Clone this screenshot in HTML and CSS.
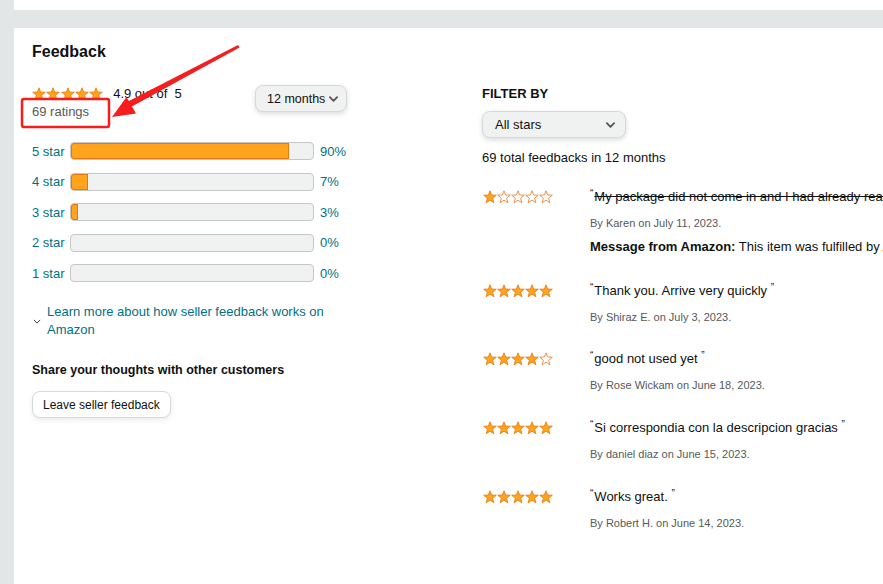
FILE: index.html
```html
<!DOCTYPE html>
<html lang="en">
<head>
    <meta charset="UTF-8">
    <title>Seller Feedback</title>
    <link rel="stylesheet" href="styles.css">
</head>

<body>
    <svg class="defs" aria-hidden="true">
        <symbol id="star-full" viewBox="0 0 14 14">
            <polygon points="7,0.8 8.65,5.03 13.3,5.2 9.66,8.17 10.9,12.8 7,10.2 3.1,12.8 4.34,8.17 0.7,5.2 5.35,5.03" fill="#ffa41c" stroke="#e47911" stroke-width="0.8" stroke-linejoin="round"/>
        </symbol>
        <symbol id="star-empty" viewBox="0 0 14 14">
            <polygon points="7,0.8 8.65,5.03 13.3,5.2 9.66,8.17 10.9,12.8 7,10.2 3.1,12.8 4.34,8.17 0.7,5.2 5.35,5.03" fill="#fff" stroke="#e8883a" stroke-width="0.9" stroke-linejoin="round"/>
        </symbol>
        <symbol id="chevron" viewBox="0 0 10 6">
            <polyline points="1,1 5,5 9,1" fill="none" stroke="#555" stroke-width="2" stroke-linecap="round" stroke-linejoin="round"/>
        </symbol>
    </svg>

    <div class="top-card"></div>

    <div class="feedback-card">
        <h1>Feedback</h1>

        <div class="columns">
            <div class="left-col">
                <div class="summary">
                    <div class="summary-text">
                        <div class="rating-line">
                            <span class="stars">
                                <svg class="star"><use href="#star-full"/></svg>
                                <svg class="star"><use href="#star-full"/></svg>
                                <svg class="star"><use href="#star-full"/></svg>
                                <svg class="star"><use href="#star-full"/></svg>
                                <svg class="star"><use href="#star-full"/></svg>
                            </span>
                            <span class="rating-value">4.9 out of&nbsp; 5</span>
                        </div>
                        <div class="rating-count">69 ratings</div>
                    </div>
                    <div class="dropdown period">
                        <span>12 months</span>
                        <svg class="chevron"><use href="#chevron"/></svg>
                    </div>
                </div>

                <div class="histogram">
                    <div class="bar-row">
                        <span class="bar-label">5 star</span>
                        <div class="bar"><div class="bar-fill" style="width: 90%"></div></div>
                        <span class="bar-pct">90%</span>
                    </div>
                    <div class="bar-row">
                        <span class="bar-label">4 star</span>
                        <div class="bar"><div class="bar-fill" style="width: 7%"></div></div>
                        <span class="bar-pct">7%</span>
                    </div>
                    <div class="bar-row">
                        <span class="bar-label">3 star</span>
                        <div class="bar"><div class="bar-fill" style="width: 3%"></div></div>
                        <span class="bar-pct">3%</span>
                    </div>
                    <div class="bar-row">
                        <span class="bar-label">2 star</span>
                        <div class="bar"></div>
                        <span class="bar-pct">0%</span>
                    </div>
                    <div class="bar-row">
                        <span class="bar-label">1 star</span>
                        <div class="bar"></div>
                        <span class="bar-pct">0%</span>
                    </div>
                </div>

                <div class="learn-more">
                    <svg class="expander" viewBox="0 0 10 6"><polyline points="1,1 5,5 9,1" fill="none" stroke="#333" stroke-width="1.2"/></svg>
                    <a href="#">Learn more about how seller feedback works on Amazon</a>
                </div>

                <h3>Share your thoughts with other customers</h3>
                <button type="button">Leave seller feedback</button>
            </div>

            <div class="right-col">
                <h4>FILTER BY</h4>
                <div class="dropdown star-filter">
                    <span>All stars</span>
                    <svg class="chevron"><use href="#chevron"/></svg>
                </div>
                <p class="total">69 total feedbacks in 12 months</p>

                <div class="review-list">
                    <div class="review">
                        <span class="stars">
                            <svg class="star"><use href="#star-full"/></svg>
                            <svg class="star"><use href="#star-empty"/></svg>
                            <svg class="star"><use href="#star-empty"/></svg>
                            <svg class="star"><use href="#star-empty"/></svg>
                            <svg class="star"><use href="#star-empty"/></svg>
                        </span>
                        <div class="review-body">
                            <p class="quote"><span class="qm">“</span><s>My package did not come in and I had already reached out to the seller</s></p>
                            <p class="byline">By Karen on July 11, 2023.</p>
                            <p class="message"><b>Message from Amazon:</b> This item was fulfilled by Amazon, and we take responsibility for this fulfillment experience.</p>
                        </div>
                    </div>

                    <div class="review">
                        <span class="stars">
                            <svg class="star"><use href="#star-full"/></svg>
                            <svg class="star"><use href="#star-full"/></svg>
                            <svg class="star"><use href="#star-full"/></svg>
                            <svg class="star"><use href="#star-full"/></svg>
                            <svg class="star"><use href="#star-full"/></svg>
                        </span>
                        <div class="review-body">
                            <p class="quote"><span class="qm">“</span>Thank you. Arrive very quickly <span class="qm">”</span></p>
                            <p class="byline">By Shiraz E. on July 3, 2023.</p>
                        </div>
                    </div>

                    <div class="review">
                        <span class="stars">
                            <svg class="star"><use href="#star-full"/></svg>
                            <svg class="star"><use href="#star-full"/></svg>
                            <svg class="star"><use href="#star-full"/></svg>
                            <svg class="star"><use href="#star-full"/></svg>
                            <svg class="star"><use href="#star-empty"/></svg>
                        </span>
                        <div class="review-body">
                            <p class="quote"><span class="qm">“</span>good not used yet <span class="qm">”</span></p>
                            <p class="byline">By Rose Wickam on June 18, 2023.</p>
                        </div>
                    </div>

                    <div class="review">
                        <span class="stars">
                            <svg class="star"><use href="#star-full"/></svg>
                            <svg class="star"><use href="#star-full"/></svg>
                            <svg class="star"><use href="#star-full"/></svg>
                            <svg class="star"><use href="#star-full"/></svg>
                            <svg class="star"><use href="#star-full"/></svg>
                        </span>
                        <div class="review-body">
                            <p class="quote"><span class="qm">“</span>Si correspondia con la descripcion gracias <span class="qm">”</span></p>
                            <p class="byline">By daniel diaz on June 15, 2023.</p>
                        </div>
                    </div>

                    <div class="review">
                        <span class="stars">
                            <svg class="star"><use href="#star-full"/></svg>
                            <svg class="star"><use href="#star-full"/></svg>
                            <svg class="star"><use href="#star-full"/></svg>
                            <svg class="star"><use href="#star-full"/></svg>
                            <svg class="star"><use href="#star-full"/></svg>
                        </span>
                        <div class="review-body">
                            <p class="quote"><span class="qm">“</span>Works great. <span class="qm">”</span></p>
                            <p class="byline">By Robert H. on June 14, 2023.</p>
                        </div>
                    </div>
                </div>
            </div>
        </div>
    </div>

    <!-- screenshot annotation drawn on top of the page -->
    <svg class="annotation" width="883" height="584" viewBox="0 0 883 584">
        <rect x="22" y="99" width="87" height="28" rx="2" fill="none" stroke="#f51d1d" stroke-width="2.5"/>
        <polygon points="238,45 239.5,47.5 130,107.5 127,102" fill="#f51d1d"/>
        <polygon points="112,117 126.5,97 136,113.5" fill="#f51d1d"/>
    </svg>
</body>
</html>
```

FILE: styles.css
```css
* {
    box-sizing: border-box;
    margin: 0;
    padding: 0;
}

body {
    background-color: #e3e6e6;
    font-family: 'Liberation Sans', Arial, sans-serif;
    font-size: 13px;
    color: #0f1111;
    padding-left: 14px;
    height: 584px;
    overflow: hidden;
    position: relative;
}

.defs {
    display: none;
}

.top-card {
    height: 10px;
    background-color: white;
}

.feedback-card {
    margin-top: 18px;
    background-color: white;
    padding: 14px 0 40px 18px;
    height: 556px;
    overflow: hidden;
}

h1 {
    font-size: 16px;
    line-height: 20px;
    font-weight: 700;
}

.columns {
    display: grid;
    grid-template-columns: 450px 1fr;
    margin-top: 24px;
}

/* left column */

.summary {
    display: flex;
    justify-content: space-between;
    align-items: flex-start;
    width: 315px;
}

.rating-line {
    display: flex;
    align-items: center;
    height: 16px;
    line-height: 16px;
}

.stars {
    display: flex;
}

.star {
    width: 14px;
    height: 14px;
}

.summary .stars {
    gap: 0.3px;
    margin-right: 10px;
}

.rating-count {
    margin-top: 2px;
    line-height: 16px;
    color: #565959;
}

.dropdown {
    display: flex;
    align-items: center;
    justify-content: space-between;
    height: 27px;
    padding: 0 10px 0 12px;
    white-space: nowrap;
    background-color: #f0f2f2;
    border: 1px solid #d5d9d9;
    border-radius: 8px;
    box-shadow: 0 2px 5px rgba(15, 17, 17, 0.15);
}

.chevron {
    width: 9px;
    height: 6px;
    flex-shrink: 0;
}

.period {
    width: 92px;
    margin-top: -1px;
    padding: 0 8px 0 11px;
    font-size: 12.5px;
}

.histogram {
    margin-top: 16px;
}

.bar-row {
    display: flex;
    align-items: center;
    height: 30.5px;
}

.bar-label {
    width: 38px;
    color: #007185;
}

.bar {
    width: 244px;
    height: 18px;
    background-color: #f0f2f2;
    border: 1px solid #c4c8c8;
    border-radius: 4px;
    overflow: hidden;
}

.bar-fill {
    height: 100%;
    background-color: #ffa41c;
    box-shadow: inset 0 0 0 1px #e47911;
    border-radius: 3px 0 0 3px;
}

.bar-pct {
    margin-left: 6px;
    color: #007185;
}

.learn-more {
    display: flex;
    align-items: center;
    width: 300px;
    margin-top: 14.5px;
    line-height: 18px;
}

.expander {
    width: 8px;
    height: 5px;
    margin: 0 6px 0 1px;
    flex-shrink: 0;
}

.learn-more a {
    color: #007185;
    text-decoration: none;
}

h3 {
    margin-top: 22px;
    font-size: 12.5px;
    line-height: 18px;
    font-weight: 700;
}

button {
    margin-top: 12px;
    height: 27px;
    padding: 0 10px;
    font-family: inherit;
    font-size: 12px;
    color: #0f1111;
    background-color: white;
    border: 1px solid #d5d9d9;
    border-radius: 8px;
    box-shadow: 0 2px 5px rgba(213, 217, 217, 0.5);
}

/* right column */

h4 {
    font-size: 13px;
    line-height: 16px;
    font-weight: 700;
}

.star-filter {
    width: 144px;
    margin-top: 9px;
}

.total {
    margin-top: 11px;
    line-height: 18px;
}

.review-list {
    margin-top: 20px;
}

.review {
    display: flex;
    margin-bottom: 24.7px;
}

.review .stars {
    width: 108px;
    flex-shrink: 0;
    height: 20px;
    align-items: center;
    padding-left: 1px;
}

.review-body {
    white-space: nowrap;
}

.quote {
    line-height: 20px;
    height: 20px;
    font-size: 13px;
}

.qm {
    font-size: 10px;
    line-height: 0;
    vertical-align: 4px;
    margin-right: 1px;
}

.byline {
    margin-top: 8px;
    line-height: 16px;
    font-size: 11px;
    color: #565959;
}

.message {
    margin-top: 7px;
    line-height: 18px;
}

.annotation {
    position: absolute;
    top: 0;
    left: 0;
    pointer-events: none;
}
```
